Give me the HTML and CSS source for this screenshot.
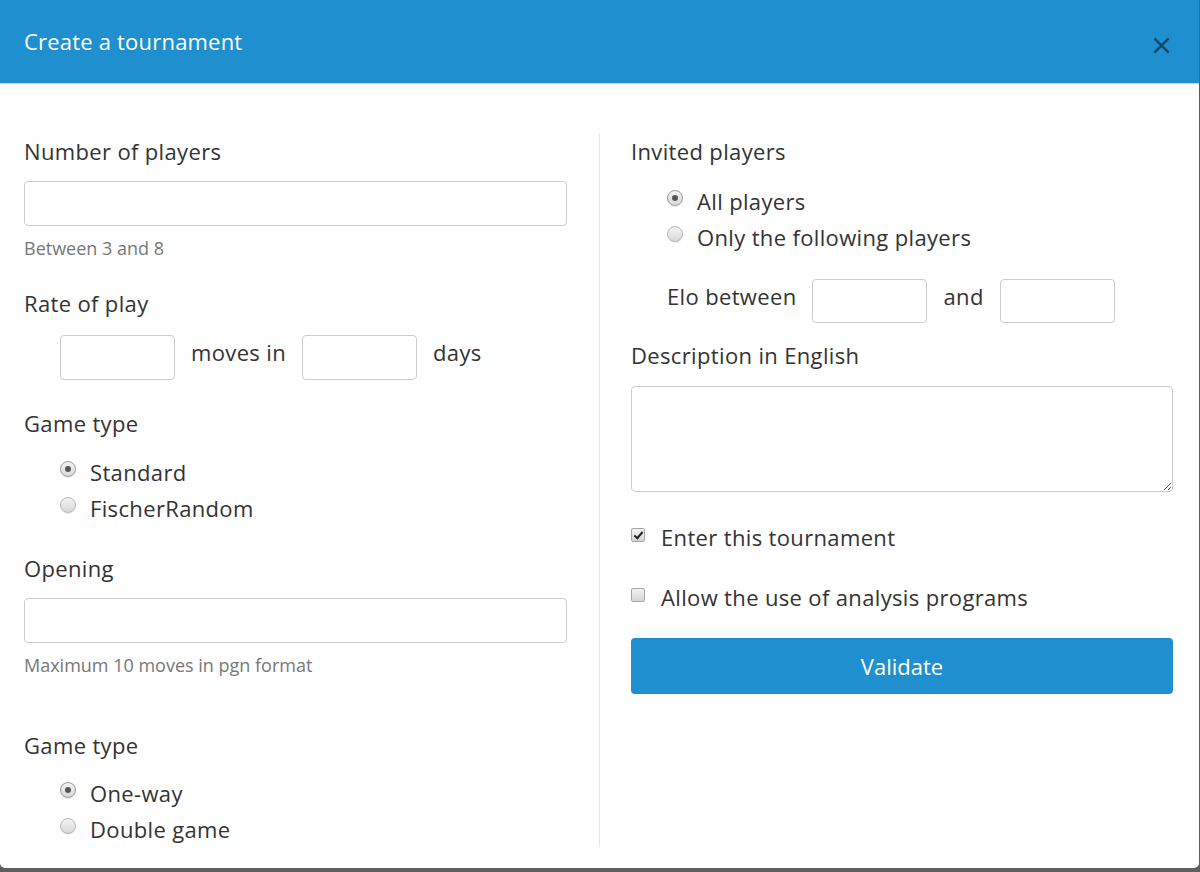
FILE: index.html
```html
<!DOCTYPE html>
<html lang="en">
<head>
    <meta charset="UTF-8">
    <title>Create a tournament</title>
    <link rel="stylesheet" href="styles.css">
</head>
<body>
    <div class="modal">
        <div class="modal-header">
            <h1>Create a tournament</h1>
            <button class="close" type="button" aria-label="Close">
                <svg width="17" height="17" viewBox="0 0 16 16"><path d="M2 2 L14 14 M14 2 L2 14" stroke="#144766" stroke-width="2.3" stroke-linecap="round"/></svg>
            </button>
        </div>

        <form class="modal-body">
            <div class="col col-left">
                <label class="field-label">Number of players</label>
                <input class="text-input gap-14" type="text">
                <p class="help gap-11">Between 3 and 8</p>

                <label class="field-label gap-32">Rate of play</label>
                <div class="inline-row rate-row gap-16">
                    <input class="text-input small" type="text">
                    <span>moves in</span>
                    <input class="text-input small" type="text">
                    <span>days</span>
                </div>

                <label class="field-label gap-31">Game type</label>
                <div class="radio-list gap-15">
                    <label class="radio"><input type="radio" name="variant" checked> Standard</label>
                    <label class="radio"><input type="radio" name="variant"> FischerRandom</label>
                </div>

                <label class="field-label gap-30">Opening</label>
                <input class="text-input gap-14" type="text">
                <p class="help gap-11">Maximum 10 moves in pgn format</p>

                <label class="field-label gap-57">Game type</label>
                <div class="radio-list gap-14">
                    <label class="radio"><input type="radio" name="rounds" checked> One-way</label>
                    <label class="radio"><input type="radio" name="rounds"> Double game</label>
                </div>
            </div>

            <div class="col col-right">
                <label class="field-label">Invited players</label>
                <div class="radio-list gap-16">
                    <label class="radio"><input type="radio" name="invited" checked> All players</label>
                    <label class="radio"><input type="radio" name="invited"> Only the following players</label>
                </div>

                <div class="inline-row elo-row gap-24">
                    <span>Elo between</span>
                    <input class="text-input small" type="text">
                    <span>and</span>
                    <input class="text-input small" type="text">
                </div>

                <label class="field-label gap-20">Description in English</label>
                <textarea class="text-area gap-15"></textarea>

                <label class="check gap-31"><input type="checkbox" checked> Enter this tournament</label>
                <label class="check gap-32"><input type="checkbox"> Allow the use of analysis programs</label>

                <button class="btn-validate gap-27" type="button">Validate</button>
            </div>
        </form>
    </div>
</body>
</html>
```

FILE: styles.css
```css
* {
    margin: 0;
    padding: 0;
    box-sizing: border-box;
}

body {
    background-color: #5e5e5e;
    font-family: "Segoe UI", "Open Sans", sans-serif;
    color: #333333;
}

/* Modal */
.modal {
    width: 1199px;
    height: 868px;
    background-color: #ffffff;
    border-radius: 0 0 5px 5px;
    overflow: hidden;
}

.modal-header {
    height: 84px;
    background-color: #1f8fcf;
    border-bottom: 1px solid #bfe2f4;
    display: flex;
    align-items: center;
    justify-content: space-between;
    padding: 0 29px 0 24px;
}

.modal-header h1 {
    font-size: 22px;
    font-weight: 400;
    letter-spacing: 0.2px;
    color: #ffffff;
    margin-top: -2px;
}

.close {
    background: none;
    border: none;
    display: flex;
    margin-top: 7px;
    cursor: pointer;
}

.modal-body {
    display: flex;
    padding: 49px 26px 21px 24px;
}

.col {
    display: flex;
    flex-direction: column;
    align-items: flex-start;
    padding-top: 6px;
}

.col-left {
    width: 576px;
    padding-right: 32px;
    border-right: 1px solid #e6e6e6;
    height: 714px;
}

.col-right {
    width: 573px;
    padding-left: 31px;
}

/* Fields */
.field-label {
    display: block;
    font-size: 22px;
    line-height: 24px;
    padding-bottom: 4px;
    letter-spacing: 0.35px;
}

.text-input {
    width: 100%;
    height: 45px;
    border: 1px solid #cccccc;
    border-radius: 4px;
    font-family: inherit;
    font-size: 18px;
    padding: 0 12px;
}

.text-input.small {
    width: 115px;
}

.text-area {
    width: 100%;
    height: 106px;
    border: 1px solid #cccccc;
    border-radius: 4px;
    font-family: inherit;
}

.help {
    font-size: 18px;
    line-height: 22px;
    color: #777777;
}

.inline-row {
    display: flex;
    align-items: center;
    gap: 16px;
    padding-left: 36px;
    font-size: 22px;
    letter-spacing: 0.35px;
}

.inline-row span {
    margin-bottom: 11px;
}

.elo-row .text-input {
    height: 44px;
}

/* Radios and checkboxes */
.radio-list {
    padding-left: 36px;
}

.radio,
.check {
    display: flex;
    align-items: center;
    font-size: 22px;
    letter-spacing: 0.35px;
    line-height: 36px;
    height: 36px;
}

.check {
    line-height: 28px;
    height: 28px;
}

.radio input {
    appearance: none;
    width: 16px;
    height: 16px;
    border-radius: 50%;
    border: 1px solid #b5b5b5;
    background: linear-gradient(#f4f4f4, #d8d8d8);
    box-shadow: 0 1px 1px rgba(0, 0, 0, 0.08);
    margin: -6px 14px 0 0;
    display: grid;
    place-items: center;
}

.radio input:checked {
    border-color: #9a9a9a;
}

.radio input:checked::after {
    content: "";
    width: 6px;
    height: 6px;
    border-radius: 50%;
    background-color: #555555;
}

.check input {
    appearance: none;
    width: 14px;
    height: 14px;
    border: 1px solid #a6a6a6;
    border-radius: 2px;
    background: linear-gradient(#f2f2f2, #d6d6d6);
    margin: -4px 16px 0 0;
    display: grid;
    place-items: center;
}

.check input:checked::after {
    content: "";
    width: 3px;
    height: 7px;
    border: solid #222222;
    border-width: 0 2px 2px 0;
    transform: rotate(40deg);
    margin-top: -2px;
}

.btn-validate {
    width: 100%;
    height: 56px;
    border: none;
    border-radius: 4px;
    background-color: #1f8fcf;
    color: #ffffff;
    font-family: inherit;
    font-size: 22px;
}

/* Spacing */
.gap-11 { margin-top: 11px; }
.gap-14 { margin-top: 14px; }
.gap-15 { margin-top: 15px; }
.gap-16 { margin-top: 16px; }
.gap-20 { margin-top: 20px; }
.gap-24 { margin-top: 24px; }
.gap-27 { margin-top: 27px; }
.gap-30 { margin-top: 30px; }
.gap-31 { margin-top: 31px; }
.gap-32 { margin-top: 32px; }
.gap-57 { margin-top: 57px; }
```
